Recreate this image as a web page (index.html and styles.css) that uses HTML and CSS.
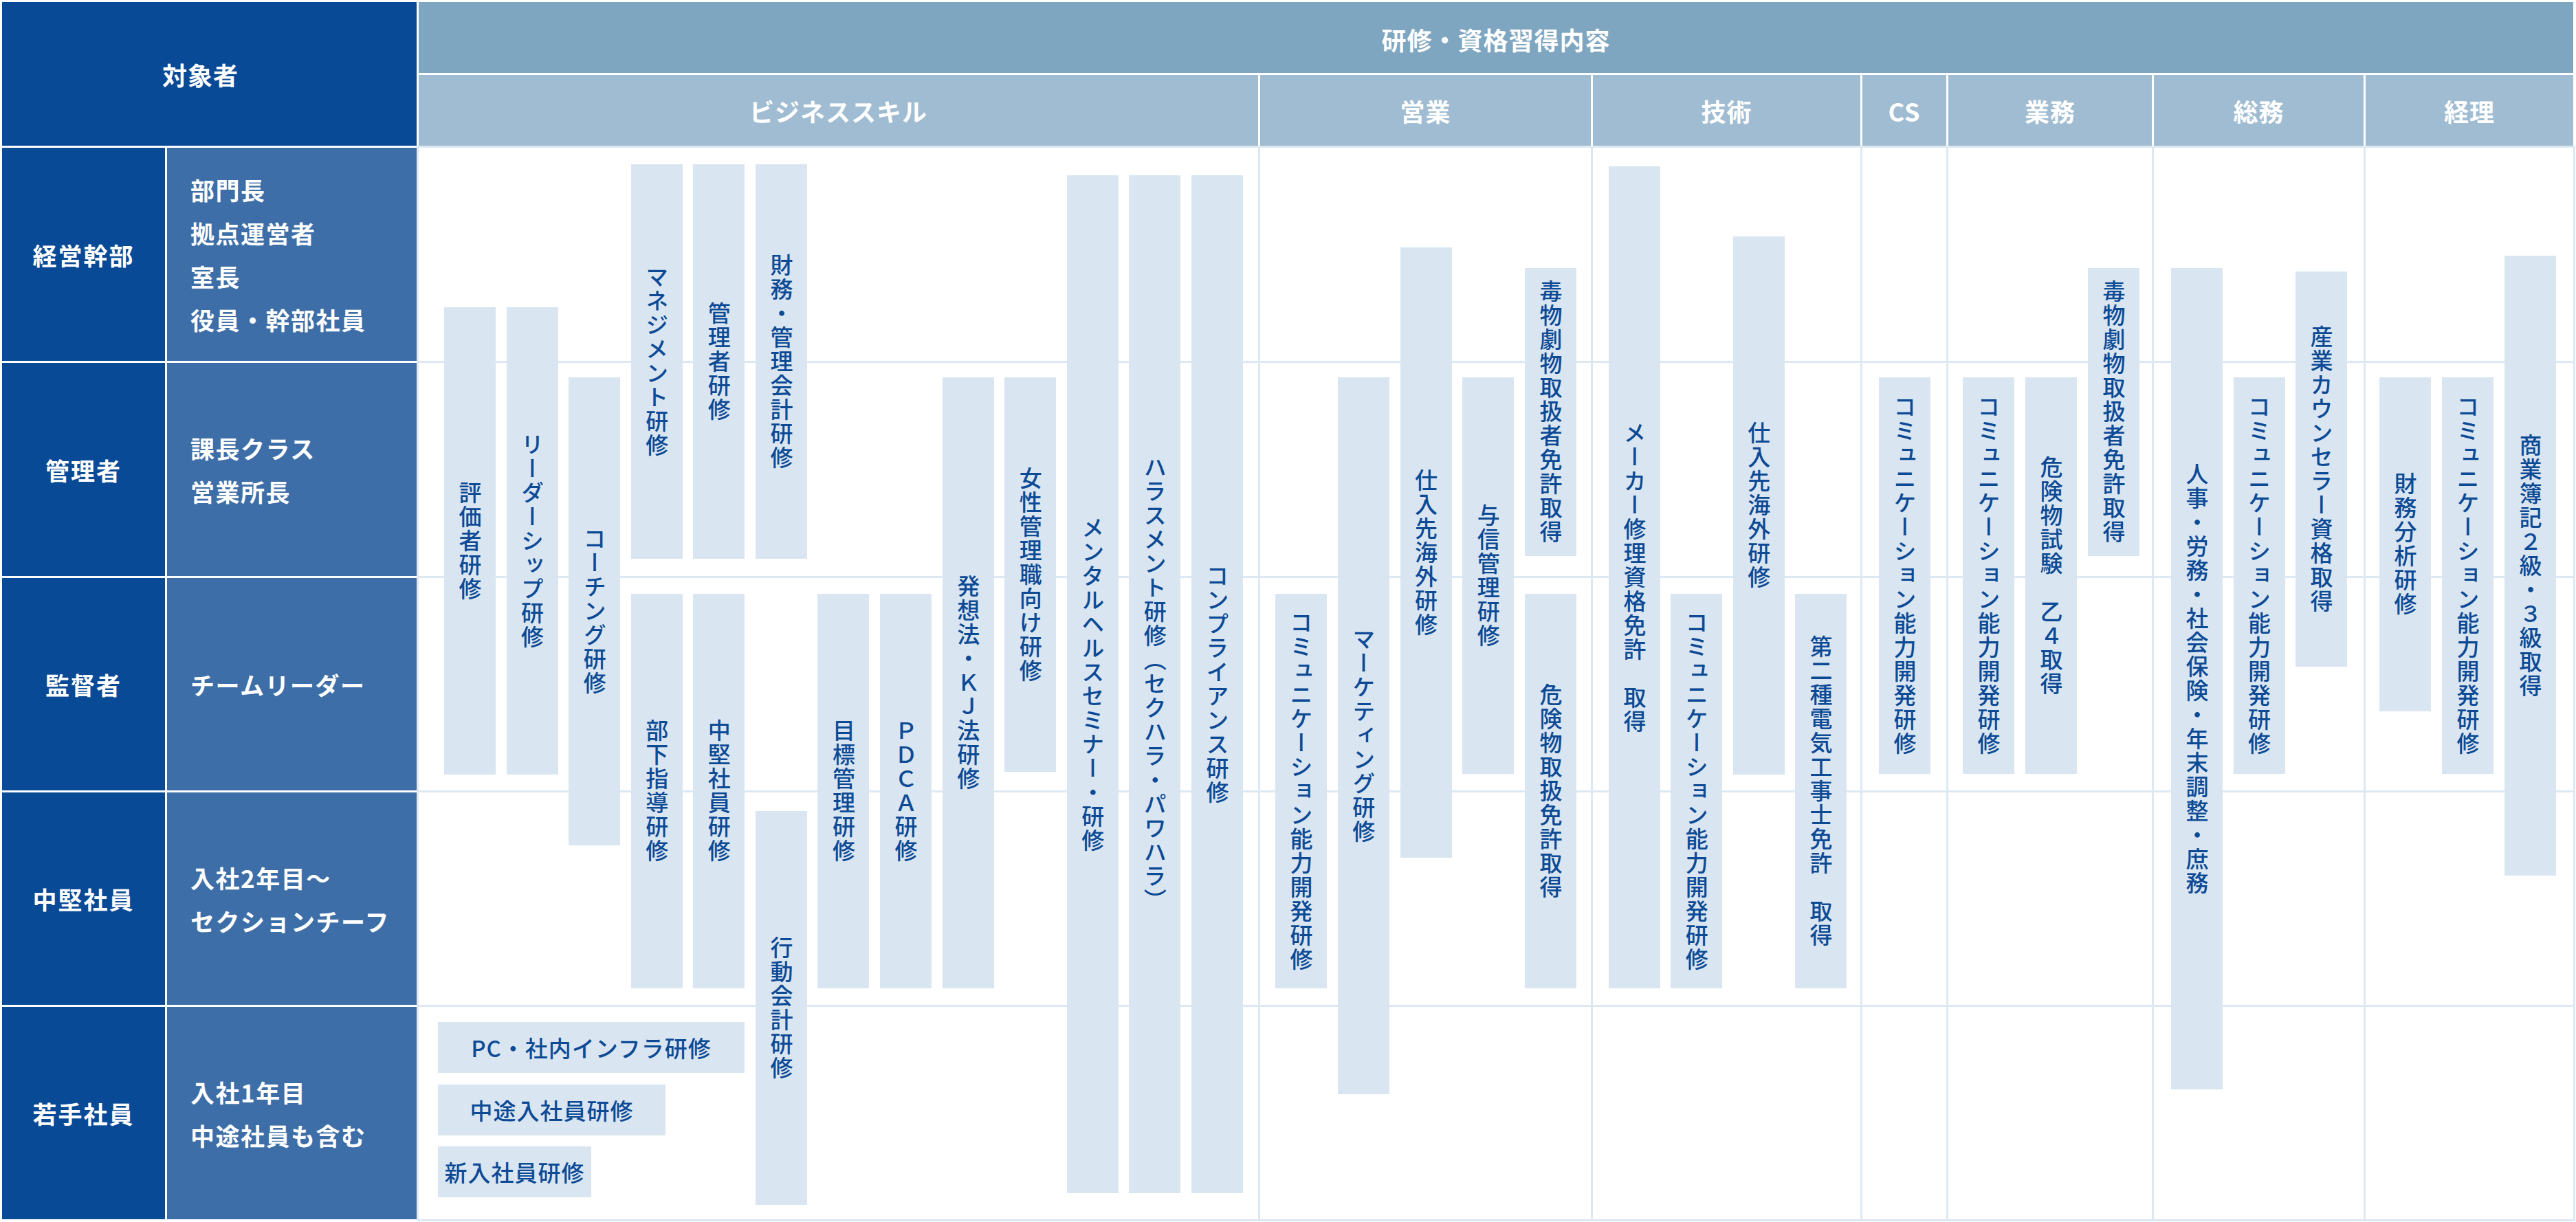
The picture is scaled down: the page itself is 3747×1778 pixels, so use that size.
FILE: index.html
```html
<!DOCTYPE html>
<html lang="ja">
<head>
<meta charset="utf-8">
<title>研修・資格習得内容</title>
<link rel="stylesheet" href="styles.css">
</head>
<body>
<div class="chart">
  <div class="hd-target">対象者</div>
  <div class="hd-main">研修・資格習得内容</div>
  <div class="hd-cat">ビジネススキル</div>
  <div class="hd-cat">営業</div>
  <div class="hd-cat">技術</div>
  <div class="hd-cat">CS</div>
  <div class="hd-cat">業務</div>
  <div class="hd-cat">総務</div>
  <div class="hd-cat">経理</div>

  <div class="lvl">経営幹部</div>
  <div class="role"><div>部門長<br>拠点運営者<br>室長<br>役員・幹部社員</div></div>
  <div class="lvl">管理者</div>
  <div class="role"><div>課長クラス<br>営業所長</div></div>
  <div class="lvl">監督者</div>
  <div class="role"><div>チームリーダー</div></div>
  <div class="lvl">中堅社員</div>
  <div class="role"><div>入社2年目〜<br>セクションチーフ</div></div>
  <div class="lvl">若手社員</div>
  <div class="role"><div>入社1年目<br>中途社員も含む</div></div>

  <!-- ビジネススキル -->
  <div class="col c-biz">
    <div class="rowlines"><div></div><div></div><div></div><div></div><div></div></div>
    <div class="lanes lanes-biz">
      <div class="lane"><div class="bar" style="margin-top:232px;height:680px"><span>評価者研修</span></div></div>
      <div class="lane"><div class="bar" style="margin-top:232px;height:680px"><span>リーダーシップ研修</span></div></div>
      <div class="lane"><div class="bar" style="margin-top:334px;height:681px"><span>コーチング研修</span></div></div>
      <div class="lane">
        <div class="bar" style="margin-top:24px;height:574px"><span>マネジメント研修</span></div>
        <div class="bar" style="margin-top:51px;height:574px"><span>部下指導研修</span></div>
      </div>
      <div class="lane">
        <div class="bar" style="margin-top:24px;height:574px"><span>管理者研修</span></div>
        <div class="bar" style="margin-top:51px;height:574px"><span>中堅社員研修</span></div>
      </div>
      <div class="lane">
        <div class="bar" style="margin-top:24px;height:574px"><span>財務・管理会計研修</span></div>
        <div class="bar" style="margin-top:367px;height:573px"><span>行動会計研修</span></div>
      </div>
      <div class="lane"><div class="bar" style="margin-top:649px;height:574px"><span>目標管理研修</span></div></div>
      <div class="lane"><div class="bar" style="margin-top:649px;height:574px"><span>ＰＤＣＡ研修</span></div></div>
      <div class="lane"><div class="bar" style="margin-top:334px;height:889px"><span>発想法・ＫＪ法研修</span></div></div>
      <div class="lane"><div class="bar" style="margin-top:334px;height:574px"><span>女性管理職向け研修</span></div></div>
      <div class="lane"><div class="bar" style="margin-top:40px;height:1481px"><span>メンタルヘルスセミナー・研修</span></div></div>
      <div class="lane"><div class="bar" style="margin-top:40px;height:1481px"><span>ハラスメント研修（セクハラ・パワハラ）</span></div></div>
      <div class="lane"><div class="bar" style="margin-top:40px;height:1481px"><span>コンプライアンス研修</span></div></div>
    </div>
    <div class="hbars">
      <div class="hbar" style="margin-top:1272px;width:446px">PC・社内インフラ研修</div>
      <div class="hbar" style="width:331px">中途入社員研修</div>
      <div class="hbar" style="width:223px">新入社員研修</div>
    </div>
  </div>

  <!-- 営業 -->
  <div class="col c-sales">
    <div class="rowlines"><div></div><div></div><div></div><div></div><div></div></div>
    <div class="lanes lanes-sales">
      <div class="lane"><div class="bar" style="margin-top:649px;height:574px"><span>コミュニケーション能力開発研修</span></div></div>
      <div class="lane"><div class="bar" style="margin-top:334px;height:1043px"><span>マーケティング研修</span></div></div>
      <div class="lane"><div class="bar" style="margin-top:145px;height:888px"><span>仕入先海外研修</span></div></div>
      <div class="lane"><div class="bar" style="margin-top:334px;height:577px"><span>与信管理研修</span></div></div>
      <div class="lane">
        <div class="bar" style="margin-top:175px;height:419px"><span>毒物劇物取扱者免許取得</span></div>
        <div class="bar" style="margin-top:55px;height:574px"><span>危険物取扱免許取得</span></div>
      </div>
    </div>
  </div>

  <!-- 技術 -->
  <div class="col c-tech">
    <div class="rowlines"><div></div><div></div><div></div><div></div><div></div></div>
    <div class="lanes lanes-tech">
      <div class="lane"><div class="bar" style="margin-top:27px;height:1196px"><span>メーカー修理資格免許　取得</span></div></div>
      <div class="lane"><div class="bar" style="margin-top:649px;height:574px"><span>コミュニケーション能力開発研修</span></div></div>
      <div class="lane"><div class="bar" style="margin-top:129px;height:783px"><span>仕入先海外研修</span></div></div>
      <div class="lane"><div class="bar" style="margin-top:649px;height:574px"><span>第二種電気工事士免許　取得</span></div></div>
    </div>
  </div>

  <!-- CS -->
  <div class="col c-cs">
    <div class="rowlines"><div></div><div></div><div></div><div></div><div></div></div>
    <div class="lanes lanes-cs">
      <div class="lane"><div class="bar" style="margin-top:334px;height:577px"><span>コミュニケーション能力開発研修</span></div></div>
    </div>
  </div>

  <!-- 業務 -->
  <div class="col c-ops">
    <div class="rowlines"><div></div><div></div><div></div><div></div><div></div></div>
    <div class="lanes lanes-ops">
      <div class="lane"><div class="bar" style="margin-top:334px;height:577px"><span>コミュニケーション能力開発研修</span></div></div>
      <div class="lane"><div class="bar" style="margin-top:334px;height:577px"><span>危険物試験　乙４取得</span></div></div>
      <div class="lane"><div class="bar" style="margin-top:175px;height:419px"><span>毒物劇物取扱者免許取得</span></div></div>
    </div>
  </div>

  <!-- 総務 -->
  <div class="col c-ga">
    <div class="rowlines"><div></div><div></div><div></div><div></div><div></div></div>
    <div class="lanes lanes-ga">
      <div class="lane"><div class="bar" style="margin-top:175px;height:1195px"><span>人事・労務・社会保険・年末調整・庶務</span></div></div>
      <div class="lane"><div class="bar" style="margin-top:334px;height:577px"><span>コミュニケーション能力開発研修</span></div></div>
      <div class="lane"><div class="bar" style="margin-top:180px;height:575px"><span>産業カウンセラー資格取得</span></div></div>
    </div>
  </div>

  <!-- 経理 -->
  <div class="col c-acc">
    <div class="rowlines"><div></div><div></div><div></div><div></div><div></div></div>
    <div class="lanes lanes-acc">
      <div class="lane"><div class="bar" style="margin-top:334px;height:486px"><span>財務分析研修</span></div></div>
      <div class="lane"><div class="bar" style="margin-top:334px;height:577px"><span>コミュニケーション能力開発研修</span></div></div>
      <div class="lane"><div class="bar" style="margin-top:157px;height:902px"><span>商業簿記２級・３級取得</span></div></div>
    </div>
  </div>
</div>
</body>
</html>
```

FILE: styles.css
```css
html, body {
  margin: 0;
  padding: 0;
  background: #ffffff;
}

body {
  font-family: "Noto Sans CJK JP", "Noto Sans", sans-serif;
}

.chart {
  display: grid;
  grid-template-columns: 237px 363px 1221px 481px 389px 122px 296px 305px 302px;
  grid-template-rows: 103px 103px 310px 310px 309px 309px 309px;
  gap: 3px;
  padding: 3px;
  width: max-content;
  background: #ffffff;
}

/* ---------- header ---------- */
.hd-target {
  grid-column: 1 / 3;
  grid-row: 1 / 3;
  background: #094a96;
  color: #ffffff;
  font-size: 36px;
  font-weight: 700;
  letter-spacing: 1px;
  display: flex;
  align-items: center;
  justify-content: center;
  padding-right: 26px;
}

.hd-main {
  grid-column: 3 / 10;
  grid-row: 1;
  background: #7fa6c0;
  color: #ffffff;
  font-size: 36px;
  font-weight: 700;
  letter-spacing: 1px;
  display: flex;
  align-items: center;
  justify-content: center;
  padding-top: 4px;
}

.hd-cat {
  grid-row: 2;
  background: #a0bcd2;
  color: #ffffff;
  font-size: 36px;
  font-weight: 700;
  letter-spacing: 1px;
  display: flex;
  align-items: center;
  justify-content: center;
}

/* ---------- left labels ---------- */
.lvl {
  grid-column: 1;
  background: #094a96;
  color: #ffffff;
  font-size: 35px;
  font-weight: 700;
  letter-spacing: 2px;
  display: flex;
  align-items: center;
  justify-content: center;
}

.role {
  grid-column: 2;
  background: #3d6ea7;
  color: #ffffff;
  font-size: 35px;
  font-weight: 700;
  letter-spacing: 1.5px;
  line-height: 63px;
  display: flex;
  align-items: center;
  padding-left: 34px;
}

/* ---------- data columns ---------- */
.col {
  grid-row: 3 / 8;
  display: grid;
  grid-template-columns: 100%;
  grid-template-rows: 100%;
  box-shadow: 0 0 0 3px #dde8f3;
  background: #ffffff;
  overflow: visible;
}

.c-biz { grid-column: 3; }
.c-sales { grid-column: 4; }
.c-tech { grid-column: 5; }
.c-cs { grid-column: 6; }
.c-ops { grid-column: 7; }
.c-ga { grid-column: 8; }
.c-acc { grid-column: 9; }

.rowlines,
.lanes,
.hbars {
  grid-column: 1;
  grid-row: 1;
}

.rowlines {
  display: grid;
  grid-template-rows: 310px 310px 309px 309px 309px;
  row-gap: 3px;
  background: #dde8f3;
}

.rowlines > div {
  background: #ffffff;
}

.lanes {
  display: flex;
  align-items: flex-start;
}

.lanes-biz { padding-left: 37px; column-gap: 15.58px; }
.lanes-sales { padding-left: 22px; column-gap: 15.75px; }
.lanes-tech { padding-left: 23px; column-gap: 15.33px; }
.lanes-cs { padding-left: 24px; }
.lanes-ops { padding-left: 21px; column-gap: 16px; }
.lanes-ga { padding-left: 25px; column-gap: 15.5px; }
.lanes-acc { padding-left: 20px; column-gap: 16px; }

.lane {
  flex: none;
  width: 75px;
  display: flex;
  flex-direction: column;
}

.bar {
  background: #d9e6f2;
  display: flex;
  align-items: center;
  justify-content: center;
  color: #0d4a95;
  font-size: 33px;
  font-weight: 500;
}

.bar span {
  writing-mode: vertical-rl;
  text-orientation: mixed;
  white-space: nowrap;
  letter-spacing: 2px;
  line-height: 1;
}

.hbars {
  display: flex;
  flex-direction: column;
  align-items: flex-start;
  row-gap: 16.5px;
  padding-left: 28px;
  pointer-events: none;
}

.hbar {
  height: 74px;
  background: #d9e6f2;
  color: #0d4a95;
  font-size: 33px;
  font-weight: 500;
  letter-spacing: 1px;
  display: flex;
  align-items: center;
  justify-content: center;
  white-space: nowrap;
}
```
